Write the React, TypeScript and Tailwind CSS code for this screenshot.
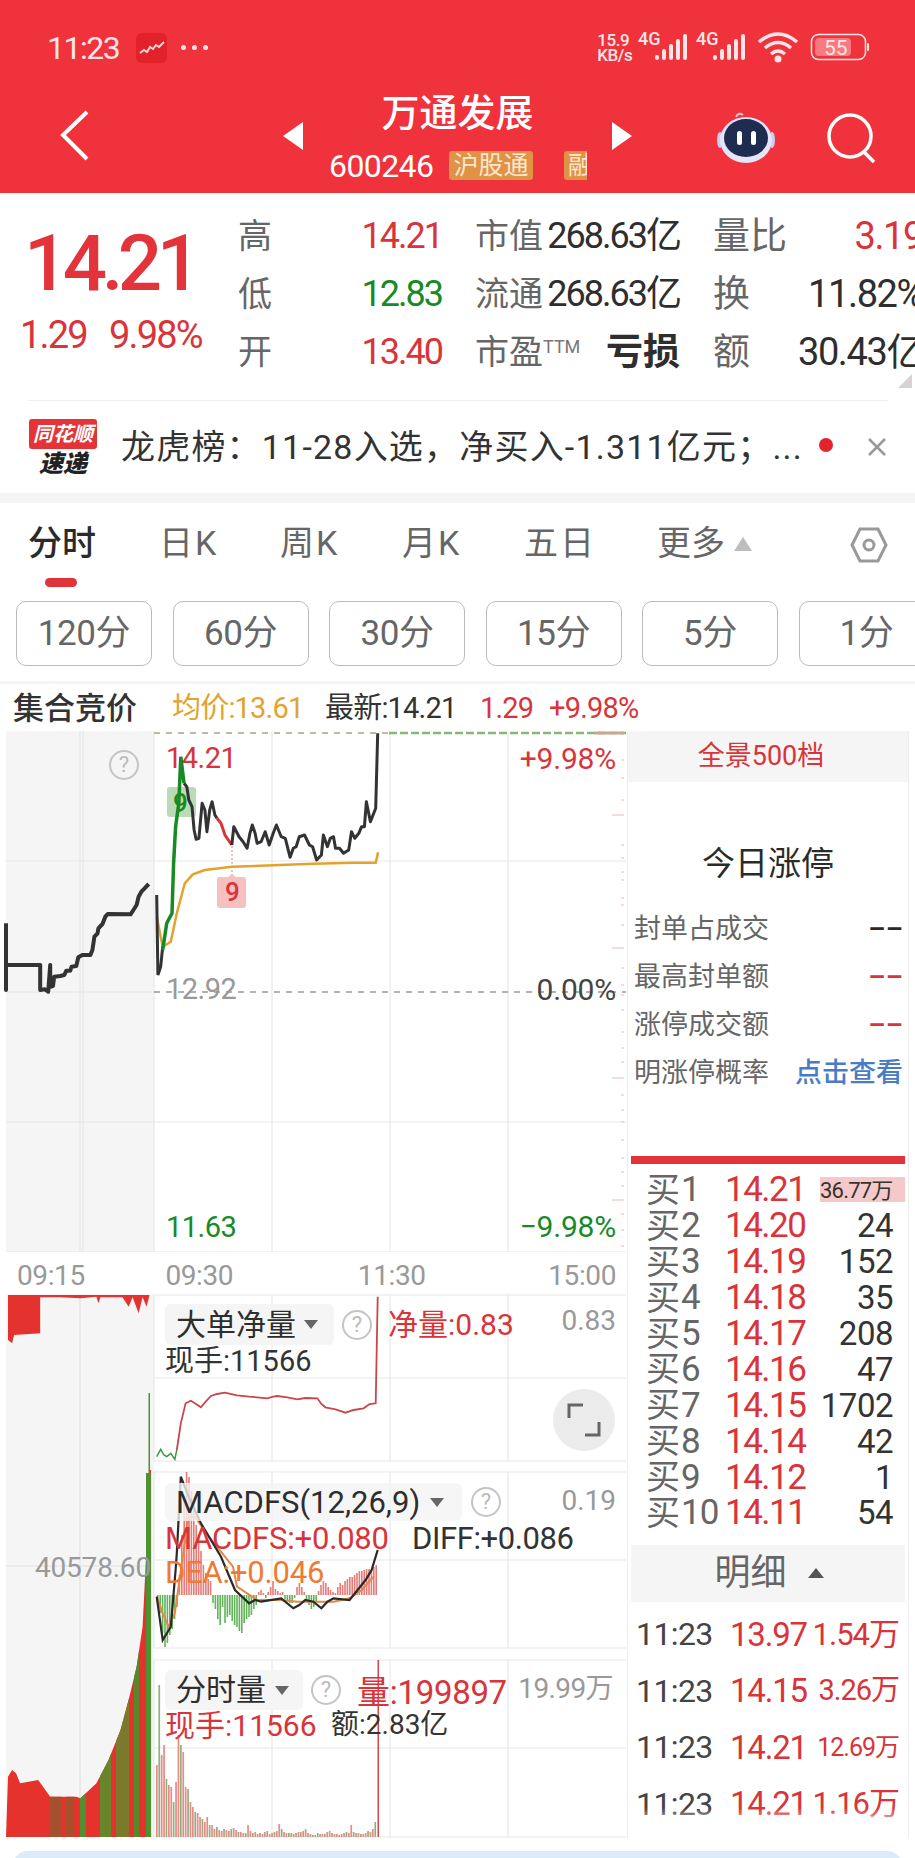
import type { ReactNode } from "react";

const RED = "#d8343a";
const GREEN = "#188a25";

// chart traces were read off the zoomed reference, so they are kept in those units
function line(points: string, base: number) {
  return points
    .trim()
    .split(/\s+/)
    .map((pair) => {
      const [x, y] = pair.split(",").map(Number);
      return `${(x / 2.489).toFixed(1)},${(y / 3 + base).toFixed(1)}`;
    })
    .join(" ");
}

const PRE_MARKET =
  "15,610 15,810 15,735 100,735 100,810 112,808 120,815 125,735 125,800 132,798 135,770 150,768 160,765 165,752 175,752 178,740 190,738 195,712 205,705 225,705 230,690 235,650 243,640 245,625 255,612 262,590 268,582 325,583 332,570 340,555 345,530 352,515 360,505 370,492";
const PRICE_OPEN = "390,525 393,765 400,740 405,680";
const PRICE_GREEN = "405,690 415,610 428,580 432,430 437,320 445,250 450,110 458,190";
const PRICE_MID = "458,190 465,200 470,240 478,260 483,330 488,358 495,355 503,250 510,270 515,335 522,270 528,245 535,285 540,295";
const PRICE_RED = "540,295 550,310 560,345 577,375";
const PRICE_REST =
  "577,375 582,320 595,350 605,365 615,385 622,340 628,315 635,340 640,370 650,365 660,335 670,375 680,340 688,315 700,350 710,355 722,412 730,385 737,380 745,350 758,345 770,375 778,380 788,420 800,405 805,345 815,380 822,355 830,350 835,385 845,385 855,400 868,390 875,335 883,355 893,340 900,320 907,320 912,245 922,305 935,265 940,40";
const AVG_LINE =
  "390,590 405,680 425,665 440,580 460,490 480,463 510,450 577,440 680,436 780,431 880,428 935,428 941,397";

const NET_GREEN = "390,500 400,478 408,495 415,500 425,490 435,508 440,480";
const NET_RED =
  "440,480 450,400 462,340 475,332 485,340 500,352 512,335 525,318 540,312 560,308 590,316 620,320 640,322 665,325 680,320 690,318 715,322 740,328 760,324 790,325 800,342 810,352 835,358 860,368 880,360 905,355 920,342 935,340 940,20";

const MACD_BLACK =
  "390,920 405,1050 425,1010 437,840 440,790 450,560 470,620 500,700 550,800 585,900 620,940 635,930 650,935 700,925 730,955 745,945 760,930 780,935 800,955 815,935 830,925 870,930 890,900 910,870 925,840 940,780";
const MACD_ORANGE =
  "390,920 405,970 420,1010 435,970 455,800 470,680 485,680 520,740 580,830 590,890 640,930 700,930 740,935 780,935 830,935 870,925 900,900 930,860";

const MACD_BARS = [
  -6, -18, -38, -52, -48, -40, -34, -24, -12, 20, 60, 96, 123, 118, 104, 92, 70, 58, 44, 30, 22, 16, 14, -8, -14, -24, -30, -12, -28, -22, -20,
  -26, -30, -32, -36, -38, -28, -24, -22, -20, -14, -10, 3, 5, 2, -3, 3, 8, 14, 6, 4, 2, 3, -4, -6, -8, -8, -3, 8, 12, 8, 3, -4, -10, -14, -12,
  -6, 4, 10, 14, 12, 8, 5, 3, 2, 8, 12, 10, 14, 16, 18, 18, 20, 22, 24, 24, 25, 26, 26, 25, 28, 30,
];
const VOLUME_BARS = [
  72, 152, 82, 92, 58, 52, 50, 35, 55, 102, 92, 85, 50, 48, 35, 30, 25, 24, 20, 18, 15, 20, 12, 12, 8, 10, 7, 6, 8, 7, 6, 8, 9, 7, 5, 5, 4, 4, 12,
  6, 4, 5, 3, 4, 3, 5, 6, 3, 4, 5, 6, 13, 8, 5, 4, 4, 4, 3, 4, 5, 5, 6, 8, 4, 3, 2, 2, 4, 3, 3, 3, 5, 6, 4, 3, 3, 2, 3, 4, 5, 4, 12, 5, 4, 4, 3, 3, 4, 6, 5, 8, 15,
];
const DEPTH_TICKS = [
  760, 778, 800, 815, 845, 858, 872, 880, 898, 905, 925, 948, 968, 985, 995, 1010, 1032, 1048, 1062, 1078, 1095, 1110, 1122, 1140, 1158, 1172, 1186,
  1200, 1214, 1230, 1246,
];

function Help({ className }: { className: string }) {
  return (
    <div
      className={`absolute flex h-[30px] w-[30px] items-center justify-center rounded-full border-2 border-[#c4c4c4] text-[22px] leading-none text-[#bbbbbb] ${className}`}
    >
      ?
    </div>
  );
}

function Caret({ className = "" }: { className?: string }) {
  return <span className={`inline-block h-0 w-0 border-x-[7px] border-t-[9px] border-x-transparent border-t-[#666666] ${className}`} />;
}

function StatusBar() {
  return (
    <div className="flex h-[85px] items-center pl-[47px] pt-[10px] text-[#fde5e6]">
      <span className="text-[32px] leading-none tracking-[-1.5px]">11:23</span>
      <div className="ml-[17px] flex h-[30px] w-[31px] items-center justify-center rounded-[6px] bg-[#e2222a]">
        <svg width="26" height="14" viewBox="0 0 26 14">
          <polyline points="1,12 5,9 8,11 11,6 14,8 17,4 20,6 25,1" fill="none" stroke="#fbd3d3" strokeWidth="2" />
        </svg>
      </div>
      <div className="ml-[14px] flex gap-[6px]">
        <span className="h-[5px] w-[5px] rounded-full bg-[#fde5e6]" />
        <span className="h-[5px] w-[5px] rounded-full bg-[#fde5e6]" />
        <span className="h-[5px] w-[5px] rounded-full bg-[#fde5e6]" />
      </div>
      <div className="ml-[389px] flex flex-col text-[17px] font-medium leading-[15px] tracking-[-0.4px]">
        <span>15.9</span>
        <span>KB/s</span>
      </div>
      <svg className="ml-[5px]" width="232" height="34" viewBox="0 0 232 34" fill="#fde5e6">
        <text x="1" y="14" fontSize="18" fontWeight="500" fontFamily="Roboto">4G</text>
        <rect x="18" y="24" width="4" height="5" rx="2" />
        <rect x="25" y="18" width="4" height="11" rx="2" />
        <rect x="32" y="13" width="4" height="16" rx="2" />
        <rect x="39" y="8" width="4" height="21" rx="2" />
        <rect x="46" y="3" width="4" height="26" rx="2" />
        <text x="59" y="14" fontSize="18" fontWeight="500" fontFamily="Roboto">4G</text>
        <rect x="76" y="24" width="4" height="5" rx="2" />
        <rect x="83" y="18" width="4" height="11" rx="2" />
        <rect x="90" y="13" width="4" height="16" rx="2" />
        <rect x="97" y="8" width="4" height="21" rx="2" />
        <rect x="104" y="3" width="4" height="26" rx="2" />
        <path d="M122 11 Q141 -5 160 11 M128 17 Q141 6 154 17 M134 23 Q141 17 148 23" fill="none" stroke="#fde5e6" strokeWidth="3.5" />
        <circle cx="141" cy="28" r="3.5" />
        <rect x="174.5" y="3.5" width="54" height="25" rx="7" fill="none" stroke="#fde5e6" strokeWidth="1.5" />
        <rect x="178" y="7" width="36" height="18" rx="4" fill="#f77a80" />
        <text x="187" y="24" fontSize="21" fontFamily="Roboto">55</text>
        <rect x="230" y="12" width="2" height="8" rx="1" />
      </svg>
    </div>
  );
}

function NavBar() {
  return (
    <div className="relative h-[108px] text-white">
      <svg className="absolute left-[58px] top-[24px]" width="32" height="52" viewBox="0 0 32 52" fill="none" stroke="#fff" strokeWidth="4">
        <polyline points="29,3 5,26 29,50" />
      </svg>
      <div className="absolute left-[283px] top-[37px] h-0 w-0 border-y-[14px] border-r-[20px] border-y-transparent border-r-white" />
      <div className="absolute left-[612px] top-[37px] h-0 w-0 border-y-[14px] border-l-[20px] border-y-transparent border-l-white" />
      <div className="flex flex-col items-center pt-[6px]">
        <div className="text-[38px] font-medium leading-[44px]">万通发展</div>
      </div>
      <div className="absolute left-[329px] top-[66px] flex h-[29px] w-[258px] items-center overflow-hidden">
        <span className="w-[120px] shrink-0 text-[32px] leading-none tracking-[-0.6px]">600246</span>
        <span className="flex h-[29px] w-[84px] shrink-0 items-center justify-center rounded-[3px] bg-[#e09245] text-[25px] leading-none text-[#fbe6d0]">沪股通</span>
        <span className="ml-[31px] flex h-[29px] w-[40px] shrink-0 items-center rounded-[3px] bg-[#e09245] pl-[4px] text-[25px] leading-none text-[#fbe6d0]">融</span>
      </div>
      <svg className="absolute left-[716px] top-[27px]" width="60" height="51" viewBox="0 0 60 51">
        <path d="M20 5 Q22 0 27 3" fill="none" stroke="#f3c6cf" strokeWidth="2" />
        <ellipse cx="4" cy="28" rx="3" ry="8" fill="#c9cdf0" />
        <ellipse cx="56" cy="28" rx="3" ry="8" fill="#c9cdf0" />
        <ellipse cx="30" cy="28" rx="26" ry="23" fill="#e4e4fa" />
        <ellipse cx="30" cy="26" rx="22" ry="19" fill="#1f2c52" />
        <rect x="21" y="19" width="5" height="14" rx="2.5" fill="#fff" />
        <rect x="35" y="19" width="5" height="14" rx="2.5" fill="#fff" />
      </svg>
      <svg className="absolute left-[825px] top-[27px]" width="54" height="54" viewBox="0 0 54 54" fill="none" stroke="#fff" strokeWidth="3.5">
        <circle cx="25" cy="24" r="21" />
        <line x1="39" y1="40" x2="49" y2="50" />
      </svg>
    </div>
  );
}

function QuoteCell({ label, value, width, color, big = false }: { label: ReactNode; value: string; width: string; color: string; big?: boolean }) {
  return (
    <div className={`flex items-center justify-between ${width}`}>
      <span className={`leading-none text-[#666666] ${big ? "text-[37px]" : "text-[34px]"}`}>{label}</span>
      <span className={`leading-none ${big ? "text-[38px] tracking-[-1.4px]" : "text-[36px] tracking-[-2px]"}`} style={{ color }}>
        {value}
      </span>
    </div>
  );
}

function Quote() {
  return (
    <div className="flex h-[207px] pt-[14px]">
      <div className="w-[238px] shrink-0 pl-[24px]">
        <div className="pt-[18px] text-[78px] font-medium leading-[78px] tracking-[-5.5px] text-[#e2343a]">14.21</div>
        <div className="mt-[13px] flex -ml-[4px] gap-[22px] text-[38px] leading-none tracking-[-1.8px] text-[#d8343a]">
          <span>1.29</span>
          <span>9.98%</span>
        </div>
      </div>
      <div className="grid grid-cols-[204px_205px_212px] grid-rows-[58px_58px_58px] gap-x-[33px]">
        <QuoteCell label="高" value="14.21" width="w-[204px]" color={RED} />
        <QuoteCell label="市值" value="268.63亿" width="w-[205px]" color="#2e2e2e" />
        <QuoteCell label="量比" value="3.19" width="w-[210px]" color={RED} big />
        <QuoteCell label="低" value="12.83" width="w-[204px]" color={GREEN} />
        <QuoteCell label="流通" value="268.63亿" width="w-[205px]" color="#2e2e2e" />
        <QuoteCell label="换" value="11.82%" width="w-[210px]" color="#2e2e2e" big />
        <QuoteCell label="开" value="13.40" width="w-[204px]" color={RED} />
        <div className="flex w-[205px] items-center justify-between">
          <span className="flex items-start text-[34px] leading-none text-[#666666]">
            市盈<span className="pt-[3px] text-[18px] leading-none text-[#777777]">TTM</span>
          </span>
          <span className="text-[37px] font-bold leading-none text-[#2e2e2e]">亏损</span>
        </div>
        <QuoteCell label="额" value="30.43亿" width="w-[210px]" color="#2e2e2e" big />
      </div>
    </div>
  );
}

function News() {
  return (
    <div className="relative mx-[28px] flex h-[93px] w-[860px] items-center border-t border-[#eeeeee]">
      <div className="absolute -top-[27px] right-[-24px] h-0 w-0 border-b-[14px] border-l-[14px] border-b-[#d4d4d4] border-l-transparent" />
      <div className="flex w-[70px] shrink-0 flex-col items-center pt-[1px]">
        <div className="flex h-[30px] w-[68px] items-center justify-center rounded-[3px] bg-[#e4343a] text-[20px] font-bold italic leading-none text-white">同花顺</div>
        <div className="mt-[2px] text-[24px] font-black italic leading-[26px] text-[#222222]">速递</div>
      </div>
      <div className="ml-[23px] w-[690px] shrink-0 whitespace-nowrap text-[34px] leading-none tracking-[1.2px] text-[#333333]">龙虎榜：11-28入选，净买入-1.311亿元；...</div>
      <span className="ml-[8px] mt-[-4px] h-[14px] w-[14px] shrink-0 rounded-full bg-[#e4242c]" />
      <svg className="ml-[34px] shrink-0" width="20" height="20" viewBox="0 0 20 20" stroke="#999999" strokeWidth="2.5">
        <line x1="2" y1="2" x2="18" y2="18" />
        <line x1="18" y1="2" x2="2" y2="18" />
      </svg>
    </div>
  );
}

function Tabs() {
  const tabs = [
    ["日K", "w-[121px]"],
    ["周K", "w-[122px]"],
    ["月K", "w-[122px]"],
    ["五日", "w-[133px]"],
  ];
  return (
    <div className="relative flex h-[84px] items-start pl-[28px] pt-[20px] text-[34px] leading-[40px] text-[#666666]">
      <span className="w-[131px] font-medium text-[#2a2a2a]">分时</span>
      {tabs.map(([name, width]) => (
        <span key={name} className={`${width} tracking-[2px]`}>
          {name}
        </span>
      ))}
      <span>更多</span>
      <span className="ml-[9px] mt-[14px] h-0 w-0 border-x-[9px] border-b-[14px] border-x-transparent border-b-[#bdbdbd]" />
      <svg className="absolute left-[850px] top-[23px]" width="38" height="38" viewBox="0 0 38 38" fill="none" stroke="#999999" strokeWidth="3">
        <polygon points="10,3 28,3 36,19 28,35 10,35 2,19" />
        <circle cx="19" cy="19" r="5" />
      </svg>
      <span className="absolute left-[45px] top-[75px] h-[9px] w-[32px] rounded-full bg-[#e0343a]" />
    </div>
  );
}

function Intervals() {
  const items = ["120分", "60分", "30分", "15分", "5分", "1分"];
  return (
    <div className="flex h-[94px] gap-[20.5px] pl-[16px] pt-[14px]">
      {items.map((item) => (
        <div key={item} className="flex h-[65px] w-[136px] shrink-0 items-center justify-center rounded-[10px] border border-[#bbbbbb] text-[35px] leading-none tracking-[-0.4px] text-[#666666]">
          {item}
        </div>
      ))}
    </div>
  );
}

function Legend() {
  return (
    <div className="flex h-[50px] items-center border-t-[3px] border-[#f5f5f5] pl-[13px] pt-[1px] text-[29px] leading-none">
      <span className="w-[159px] text-[31px] font-medium text-[#333333]">集合竞价</span>
      <span className="w-[153px] tracking-[-0.8px] text-[#e2a32e]">均价:13.61</span>
      <span className="w-[155px] tracking-[-0.8px] text-[#333333]">最新:14.21</span>
      <span className="w-[69px] tracking-[-0.8px] text-[#d8343a]">1.29</span>
      <span className="tracking-[-0.8px] text-[#d8343a]">+9.98%</span>
    </div>
  );
}

function PriceChart() {
  return (
    <div className="relative h-[521px] w-[627px]">
      <svg className="absolute inset-0" width="627" height="521" viewBox="0 731 627 521">
        <rect x="6" y="731" width="148" height="521" fill="#f5f5f5" />
        <g stroke="#e8e8e8" strokeWidth="1.2">
          <line x1="6" y1="861" x2="626" y2="861" />
          <line x1="6" y1="1122" x2="626" y2="1122" />
          <line x1="6" y1="1252" x2="626" y2="1252" />
          <line x1="80" y1="731" x2="80" y2="1252" />
          <line x1="83" y1="731" x2="83" y2="1252" />
          <line x1="154" y1="731" x2="154" y2="1252" />
          <line x1="272" y1="731" x2="272" y2="1252" />
          <line x1="390" y1="731" x2="390" y2="1252" />
          <line x1="508" y1="731" x2="508" y2="1252" />
          <line x1="6" y1="992" x2="154" y2="992" />
        </g>
        <line x1="154" y1="733" x2="389" y2="733" stroke="#a8a88a" strokeWidth="1.5" strokeDasharray="6 6" />
        <line x1="389" y1="733" x2="626" y2="733" stroke="#88b878" strokeWidth="2.5" strokeDasharray="8 3" />
        <line x1="594" y1="733" x2="624" y2="733" stroke="#c8a890" strokeWidth="3" />
        <line x1="154" y1="992" x2="626" y2="992" stroke="#999999" strokeWidth="1.5" strokeDasharray="6 6" />
        {DEPTH_TICKS.map((y, i) => (
          <line key={y} x1={i % 8 === 3 ? 612 : 621} y1={y} x2="624" y2={y} stroke="#f3d0d0" strokeWidth="1.5" />
        ))}
        <polyline points={line(PRE_MARKET, 720)} fill="none" stroke="#333333" strokeWidth="4" strokeLinejoin="round" />
        <line x1="232" y1="846" x2="232" y2="877" stroke="#d88" strokeWidth="1" strokeDasharray="2 2" />
        <polyline points={line(AVG_LINE, 720)} fill="none" stroke="#e2a32e" strokeWidth="2.5" />
        <polyline points={line(PRICE_OPEN, 720)} fill="none" stroke="#333333" strokeWidth="3" />
        <rect x="167" y="787" width="29" height="30" rx="3" fill="#b9dcb6" />
        <polyline points={line(PRICE_MID, 720)} fill="none" stroke="#333333" strokeWidth="3" strokeLinejoin="round" />
        <polyline points={line(PRICE_RED, 720)} fill="none" stroke="#d8343a" strokeWidth="3" />
        <polyline points={line(PRICE_REST, 720)} fill="none" stroke="#333333" strokeWidth="3" strokeLinejoin="round" />
        <polyline points={line(PRICE_GREEN, 720)} fill="none" stroke="#188a25" strokeWidth="3.5" />
        <path d="M217 880 Q217 877 220 877 L228 877 L232 874 L236 877 L243 877 Q246 877 246 880 L246 905 Q246 908 243 908 L220 908 Q217 908 217 905 Z" fill="#f7c0c0" />
      </svg>
      <Help className="left-[109px] top-[19px]" />
      <span className="absolute left-[173px] top-[59px] text-[26px] font-medium leading-none text-[#188a25]">9</span>
      <span className="absolute left-[225px] top-[148px] text-[26px] font-medium leading-none text-[#d8343a]">9</span>
      <span className="absolute left-[166px] top-[13px] text-[29px] leading-none tracking-[-0.5px] text-[#d8343a]">14.21</span>
      <span className="absolute right-[11px] top-[13px] text-[30px] leading-none tracking-[-0.2px] text-[#d8343a]">+9.98%</span>
      <span className="absolute left-[166px] top-[244px] text-[29px] leading-none tracking-[-0.5px] text-[#999999]">12.92</span>
      <span className="absolute right-[11px] top-[244px] text-[30px] leading-none tracking-[-0.2px] text-[#444444]">0.00%</span>
      <span className="absolute bottom-[10px] left-[166px] text-[29px] leading-none tracking-[-0.5px] text-[#188a25]">11.63</span>
      <span className="absolute bottom-[10px] right-[11px] text-[30px] leading-none tracking-[-0.2px] text-[#188a25]">−9.98%</span>
    </div>
  );
}

function TimeAxis() {
  return (
    <div className="flex h-[42px] w-[627px] items-start justify-between pl-[17px] pr-[11px] pt-[10px] text-[28px] leading-none tracking-[-0.4px] text-[#999999]">
      <span className="w-[148px]">09:15</span>
      <span className="w-[192px]">09:30</span>
      <span className="w-[190px]">11:30</span>
      <span>15:00</span>
    </div>
  );
}

function IndicatorCharts() {
  const panels = [
    [1295, 1378, 1461],
    [1472, 1560, 1648],
    [1660, 1748, 1837],
  ];
  return (
    <div className="relative h-[544px] w-[627px]">
      <svg className="absolute inset-0" width="627" height="544" viewBox="0 1294 627 544">
        <rect x="6" y="1294" width="148" height="543" fill="#f5f5f5" />
        <line x1="80" y1="1294" x2="80" y2="1837" stroke="#e2e2e2" strokeWidth="1.2" />
        <line x1="6" y1="1566" x2="150" y2="1566" stroke="#e2e2e2" strokeWidth="1.2" />
        {panels.flat().map((y) => (
          <line key={y} x1="154" y1={y} x2="626" y2={y} stroke="#e8e8e8" strokeWidth="1.2" />
        ))}
        {panels.map(([top, , bottom]) => (
          <g key={top} stroke="#e8e8e8" strokeWidth="1.2">
            <line x1="154" y1={top} x2="154" y2={bottom} />
            <line x1="272" y1={top} x2="272" y2={bottom} />
            <line x1="390" y1={top} x2="390" y2={bottom} />
            <line x1="508" y1={top} x2="508" y2={bottom} />
          </g>
        ))}

        <polygon
          points={line(
            "20,15 20,150 30,160 35,135 100,130 100,22 150,22 200,25 240,20 245,40 250,22 305,22 320,50 330,22 345,70 355,22 365,50 372,15",
            1290,
          )}
          fill="#e4322f"
        />
        <clipPath id="volume-left">
          <polygon
            points={line(
              "15,803 20,620 30,600 40,610 50,640 95,630 125,680 190,680 200,685 240,640 270,570 300,480 320,390 340,290 355,170 362,0 368,-150 373,-300 376,-300 376,803",
              1570,
            )}
          />
        </clipPath>
        <g clipPath="url(#volume-left)">
          <rect x="6" y="1300" width="148" height="537" fill="#e6322d" />
          <rect x="50" y="1500" width="12" height="337" fill="#a6502e" />
          <rect x="66" y="1500" width="8" height="337" fill="#a6502e" />
          <rect x="80" y="1500" width="6" height="337" fill="#4f9030" />
          <rect x="100" y="1500" width="11" height="337" fill="#68852c" />
          <rect x="116" y="1500" width="13" height="337" fill="#7b7a2c" />
          <rect x="134" y="1500" width="5" height="337" fill="#58882c" />
        </g>
        <rect x="148.5" y="1393" width="1.5" height="80" fill="#4f9030" />
        <rect x="146" y="1473" width="5" height="364" fill="#4f9030" />

        <polyline points={line(NET_GREEN, 1290)} fill="none" stroke="#3f9a3f" strokeWidth="1.5" />
        <polyline points={line(NET_RED, 1290)} fill="none" stroke="#c9474b" strokeWidth="1.8" />

        {MACD_BARS.map((v, i) => (
          <rect
            key={i}
            x={157 + i * 2.4}
            y={v > 0 ? 1595 - v : 1595}
            width="1.6"
            height={Math.abs(v)}
            fill={v > 0 ? "#e67b78" : "#63b35a"}
          />
        ))}
        <polyline points={line(MACD_ORANGE, 1290)} fill="none" stroke="#e6874a" strokeWidth="2" />
        <polyline points={line(MACD_BLACK, 1290)} fill="none" stroke="#2a2a2a" strokeWidth="2.2" />

        {VOLUME_BARS.map((v, i) => (
          <rect key={i} x={156 + i * 2.4} y={1837 - v} width="1.7" height={v} fill={i % 3 === 1 ? "#8db27a" : "#e88a88"} />
        ))}
        <rect x="377.5" y="1660" width="1.5" height="177" fill="#d8454a" />
      </svg>

      <div className="absolute left-[165px] top-[10px] flex h-[41px] w-[169px] items-center rounded-[6px] bg-[#f4f4f4]/90 pl-[11px] text-[30px] leading-none text-[#2e2e2e]">
        大单净量
        <Caret className="ml-[8px]" />
      </div>
      <Help className="left-[342px] top-[16px]" />
      <span className="absolute left-[388px] top-[16px] text-[30px] leading-none text-[#d8343a]">净量:0.83</span>
      <span className="absolute right-[11px] top-[13px] text-[28px] leading-none text-[#999999]">0.83</span>
      <span className="absolute left-[165px] top-[53px] text-[29px] leading-none text-[#333333]">现手:11566</span>
      <div className="absolute left-[553px] top-[95px] flex h-[62px] w-[62px] items-center justify-center rounded-full bg-[#ececec]">
        <svg width="34" height="34" viewBox="0 0 34 34" fill="none" stroke="#666666" strokeWidth="3">
          <polyline points="2,15 2,2 16,2" />
          <polyline points="32,19 32,32 18,32" />
        </svg>
      </div>

      <div className="absolute left-[165px] top-[189px] flex h-[38px] w-[297px] items-center rounded-[6px] bg-[#f4f4f4]/80 pl-[11px] text-[31px] leading-none text-[#2e2e2e]">
        MACDFS(12,26,9)
        <Caret className="ml-[10px]" />
      </div>
      <Help className="left-[471px] top-[193px]" />
      <span className="absolute right-[11px] top-[193px] text-[28px] leading-none text-[#999999]">0.19</span>
      <span className="absolute left-[165px] top-[229px] text-[31px] leading-none tracking-[-0.2px] text-[#d8343a]">MACDFS:+0.080</span>
      <span className="absolute left-[412px] top-[229px] text-[31px] leading-none tracking-[-0.4px] text-[#333333]">DIFF:+0.086</span>
      <span className="absolute left-[165px] top-[263px] text-[31px] leading-none tracking-[-0.2px] text-[#ee7b33]">DEA:+0.046</span>
      <span className="absolute left-[35px] top-[260px] text-[28px] leading-none tracking-[-0.2px] text-[#999999]">40578.60</span>

      <div className="absolute left-[165px] top-[376px] flex h-[40px] w-[138px] items-center rounded-[6px] bg-[#f4f4f4]/90 pl-[11px] text-[30px] leading-none text-[#2e2e2e]">
        分时量
        <Caret className="ml-[9px]" />
      </div>
      <Help className="left-[311px] top-[381px]" />
      <span className="absolute left-[357px] top-[382px] text-[33px] leading-none tracking-[-0.3px] text-[#d8343a]">量:199897</span>
      <span className="absolute right-[14px] top-[381px] text-[28px] leading-none tracking-[-0.6px] text-[#999999]">19.99万</span>
      <span className="absolute left-[165px] top-[417px] text-[30px] leading-none text-[#d8343a]">现手:11566</span>
      <span className="absolute left-[331px] top-[417px] text-[28px] leading-none text-[#333333]">额:2.83亿</span>
    </div>
  );
}

function LimitRow({ label, value, color }: { label: string; value: string; color: string }) {
  return (
    <div className="flex h-[48px] items-center justify-between pl-[5px] pr-[5px]">
      <span className="text-[27px] leading-none text-[#666666]">{label}</span>
      <span className="text-[27px] font-medium leading-none" style={{ color }}>
        {value}
      </span>
    </div>
  );
}

function SidePanel() {
  const bids = [
    ["1", "14.21", ""],
    ["2", "14.20", "24"],
    ["3", "14.19", "152"],
    ["4", "14.18", "35"],
    ["5", "14.17", "208"],
    ["6", "14.16", "47"],
    ["7", "14.15", "1702"],
    ["8", "14.14", "42"],
    ["9", "14.12", "1"],
    ["10", "14.11", "54"],
  ];
  const trades = [
    ["13.97", "1.54万", "text-[31px]"],
    ["14.15", "3.26万", "text-[29px]"],
    ["14.21", "12.69万", "text-[25px]"],
    ["14.21", "1.16万", "text-[31px]"],
  ];
  return (
    <div className="relative h-[1107px] w-[282px] border-x border-[#eeeeee]">
      <div className="flex h-[51px] items-center justify-center bg-[#f5f5f5] pr-[14px] text-[27px] leading-none text-[#d8343a]">全景500档</div>
      <div className="pt-[64px] text-center text-[33px] leading-[36px] text-[#2a2a2a]">今日涨停</div>
      <div className="pl-[1px] pt-[23px]">
        <LimitRow label="封单占成交" value="––" color="#2a2a2a" />
        <LimitRow label="最高封单额" value="––" color={RED} />
        <LimitRow label="涨停成交额" value="––" color={RED} />
        <LimitRow label="明涨停概率" value="点击查看" color="#4a7cc6" />
      </div>

      <div className="mx-[3px] mt-[59px] h-[8px] bg-[#e2343a]" />
      <div className="pt-[8px]">
        {bids.map(([level, price, volume]) => (
          <div key={level} className="relative flex h-[35.9px] items-center pl-[18px] leading-none">
            <span className="text-[34px] text-[#666666]">买</span>
            <span className="w-[45px] pl-[1px] text-[35px] tracking-[-1px] text-[#666666]">{level}</span>
            <span className="text-[35px] tracking-[-1.5px] text-[#d8343a]">{price}</span>
            {volume ? (
              <span className="absolute right-[15px] text-[33px] tracking-[-0.5px] text-[#333333]">{volume}</span>
            ) : (
              <span className="absolute right-[3px] top-[5px] flex h-[25px] w-[85px] items-end bg-[#f5c9c9] text-[22px] tracking-[-0.8px] text-[#333333]">36.77万</span>
            )}
          </div>
        ))}
      </div>

      <div className="mx-[3px] mt-[14px] flex h-[57px] items-center justify-center bg-[#f5f5f5] text-[36px] leading-none text-[#666666]">
        <span className="pl-[2px]">明细</span>
        <span className="ml-[21px] h-0 w-0 border-x-[8px] border-b-[10px] border-x-transparent border-b-[#555555]" />
      </div>
      <div className="relative pt-[4px]">
        {trades.map(([price, volume, size], i) => (
          <div key={i} className="flex h-[56.5px] items-center pl-[8px] pr-[9px] leading-none">
            <span className="w-[94px] text-[32px] tracking-[-0.6px] text-[#444444]">11:23</span>
            <span className="text-[33px] tracking-[-1.2px] text-[#d8343a]">{price}</span>
            <span className={`ml-auto tracking-[-1px] text-[#d8343a] ${size}`}>{volume}</span>
          </div>
        ))}
        <div className="absolute inset-x-0 bottom-[2px] h-[22px] bg-gradient-to-b from-white/0 to-white" />
      </div>
    </div>
  );
}

export default function App() {
  return (
    <div className="h-[1858px] w-[915px] overflow-hidden bg-white font-['Roboto','Noto_Sans_CJK_SC',sans-serif]">
      <div className="h-[193px] bg-[#ef323b]">
        <StatusBar />
        <NavBar />
      </div>
      <Quote />
      <News />
      <div className="h-[10px] bg-[#f5f5f5]" />
      <Tabs />
      <Intervals />
      <Legend />
      <div className="flex h-[1107px]">
        <div className="w-[627px]">
          <PriceChart />
          <TimeAxis />
          <IndicatorCharts />
        </div>
        <SidePanel />
      </div>
      <div className="ml-[12px] mt-[13px] h-[20px] w-[891px] rounded-t-[16px] bg-[#dcebfa]" />
    </div>
  );
}
